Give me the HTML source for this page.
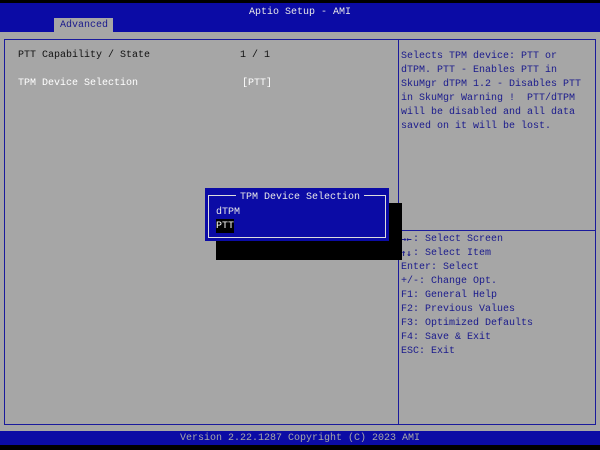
<!DOCTYPE html>
<html><head><style>
*{margin:0;padding:0}
body{width:600px;height:450px;background:#000;position:relative;overflow:hidden;font-family:"Liberation Mono","DejaVu Sans Mono",monospace;font-size:10px;line-height:14px}
.a{position:absolute;white-space:pre}
.blue{background:#0b0ba5}
.gray{background:#a6a6a6}
.hl{color:#1a1a8c}
.ar{font-family:"DejaVu Sans Mono",monospace;font-size:9px;font-weight:bold;line-height:10px;display:inline-block;vertical-align:top;margin-top:2px;width:12px}
</style></head><body>
<div class="a blue" style="left:0;top:3px;width:600px;height:29px"></div>
<div class="a" style="left:0;top:6px;width:600px;text-align:center;color:#e8e8e8">Aptio Setup - AMI</div>
<div class="a gray" style="left:54px;top:18px;width:59px;height:14px"></div>
<div class="a" style="left:60px;top:19px;color:#1a1a8c">Advanced</div>
<div class="a gray" style="left:0;top:32px;width:600px;height:399px"></div>
<div class="a" style="left:4px;top:39px;width:592px;border:1px solid #1a1a9c;box-sizing:border-box;height:386px"></div>
<div class="a" style="left:398px;top:39px;width:1px;height:386px;background:#1a1a9c"></div>
<div class="a" style="left:398px;top:230px;width:198px;height:1px;background:#1a1a9c"></div>
<div class="a" style="left:18px;top:49px;color:#111">PTT Capability / State</div>
<div class="a" style="left:240px;top:49px;color:#111">1 / 1</div>
<div class="a" style="left:18px;top:77px;color:#fff">TPM Device Selection</div>
<div class="a" style="left:242px;top:77px;color:#fff">[PTT]</div>
<div class="a hl" style="left:401px;top:50px">Selects TPM device: PTT or
dTPM. PTT - Enables PTT in
SkuMgr dTPM 1.2 - Disables PTT
in SkuMgr Warning !  PTT/dTPM
will be disabled and all data
saved on it will be lost.</div>
<div class="a hl" style="left:401px;top:233px"><span class="ar">→←</span>: Select Screen
<span class="ar">↑↓</span>: Select Item
Enter: Select
+/-: Change Opt.
F1: General Help
F2: Previous Values
F3: Optimized Defaults
F4: Save &amp; Exit
ESC: Exit</div>
<div class="a" style="left:216px;top:203px;width:186px;height:57px;background:#000"></div>
<div class="a blue" style="left:205px;top:188px;width:184px;height:53px"></div>
<div class="a" style="left:208px;top:195px;width:178px;height:43px;border:1px solid #ddd;box-sizing:border-box"></div>
<div class="a blue" style="left:236px;top:190px;width:128px;height:12px"></div>
<div class="a" style="left:240px;top:191px;color:#e8e8e8">TPM Device Selection</div>
<div class="a" style="left:216px;top:206px;color:#e8e8e8">dTPM</div>
<div class="a" style="left:216px;top:219px;color:#fff;background:#000;line-height:13px;padding-top:1px">PTT</div>
<div class="a blue" style="left:0;top:431px;width:600px;height:14px"></div>
<div class="a" style="left:0;top:432px;width:600px;text-align:center;color:#a8a8a8">Version 2.22.1287 Copyright (C) 2023 AMI</div>
</body></html>
